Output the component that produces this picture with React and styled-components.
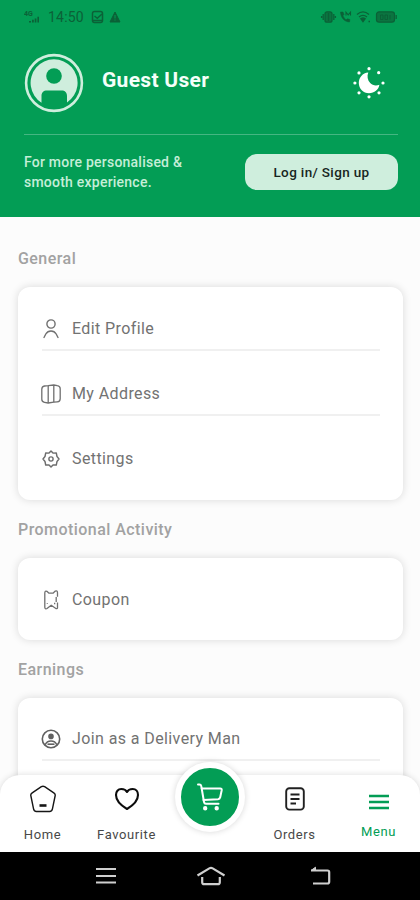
import React from "react";
import styled, { createGlobalStyle } from "styled-components";

const GlobalStyle = createGlobalStyle`
	* {
		box-sizing: border-box;
	}
	body {
		margin: 0;
		background: #fcfcfc;
		font-family: Roboto, "Liberation Sans", sans-serif;
	}
`;

const UserIcon = () => (
	<svg width="18" height="22" viewBox="0 0 18 22" fill="none" stroke="#707070" strokeWidth="1.400" strokeLinecap="round">
		<circle cx="9" cy="6" r="4.100" />
		<path d="M2 19.500 3.800 16C5 14 6.800 13 9 13s4 1 5.200 3l1.800 3.500" />
	</svg>
);

const MapIcon = () => (
	<svg width="20" height="20" viewBox="0 0 20 20" fill="none" stroke="#707070" strokeWidth="1.3" strokeLinejoin="round">
		<path d="M.8 5.200C.8 3.200 2 2.300 3.500 2l3.700-.3 5.600-.7 3.500.7c2 .3 2.900 1.300 2.900 3v10c0 2-.9 2.900-2.900 3.100l-3.500.4-5.600.8-3.700-.7C1.700 18 .8 17 .8 15.300z" />
		<path d="M7.200 1.700V19M12.800 1v17.200" />
	</svg>
);

const GearIcon = () => (
	<svg width="18" height="18" viewBox="0 0 18 18" fill="none" stroke="#6c6c6c" strokeWidth="1.400" strokeLinejoin="round">
		<path d="M9 1 11 3.100 14.300 3 15 6.500 17 9l-2 2.500-.7 3.500-3.300-.1L9 17l-2-2.100-3.300.1L3 11.500 1 9l2-2.500L3.700 3 7 3.100z" />
		<circle cx="9" cy="9" r="2.100" />
	</svg>
);

const CouponIcon = () => (
	<svg width="16" height="20" viewBox="0 0 16 20" fill="none" stroke="#707070" strokeWidth="1.3" strokeLinejoin="round">
		<path d="M1.800 17.300V3C1.800 1.200 2.700.7 3.900 1.300L6 3.200h4L12.300 1.100c1.300-.7 2.200 0 2.200 1.700v3.900M13.200 7v5M14.500 12.500v5.300c-.2 1-1.200 1-2 .4L8.200 15.200 4 18.500c-1 .7-2.200.3-2.200-1.200" />
		<path d="M4.300 13v.8M11 13.500h1.300" />
	</svg>
);

const DriverIcon = () => (
	<svg width="20" height="20" viewBox="0 0 20 20" fill="none" stroke="#606060" strokeWidth="1.6">
		<circle cx="10" cy="10" r="8.700" />
		<circle cx="10" cy="7.400" r="2" fill="#606060" />
		<path d="M4.200 15.800c1.200-2.800 3.200-3.800 5.800-3.800s4.600 1 5.800 3.800" />
		<path d="M6.500 15.200h7" />
	</svg>
);

const HomeIcon = () => (
	<svg width="28" height="28" viewBox="0 0 28 28" fill="none" stroke="#161616" strokeWidth="1.4" strokeLinejoin="round">
		<path d="M12.400 1.700c1-.6 2.200-.6 3.200 0l9.200 6.100c1.300.9 1.700 1.900 1.300 3.200l-2.600 12.600c-.3 1.900-1.200 2.900-2.900 2.900H7.400c-1.700 0-2.600-1-2.900-2.900L1.900 11c-.4-1.300 0-2.300 1.300-3.200z" />
		<path d="M10.500 20.500h7" strokeWidth="2.600" />
	</svg>
);

const HeartIcon = () => (
	<svg width="26" height="24" viewBox="0 0 26 24" fill="none" stroke="#0c0c0c" strokeWidth="2.100" strokeLinejoin="round">
		<path d="M13 22C8.500 19.300 2 14 2 8c0-3.300 2-6 5.300-6C10 2 12 3 13 5 14 3 16 2 18.700 2 22 2 24 4.700 24 8c0 6-6.500 11.300-11 14z" />
	</svg>
);

const OrdersIcon = () => (
	<svg width="20" height="24" viewBox="0 0 20 24" fill="none" stroke="#202020" strokeWidth="1.9">
		<rect x="1.200" y="1.200" width="17.600" height="21.400" rx="3.200" />
		<path d="M5.500 7.500h9M5.500 12h9M5.500 16.500h5.500" />
	</svg>
);

const MenuIcon = () => (
	<svg width="22" height="16" viewBox="0 0 22 16" stroke="#039d55" strokeWidth="2.400">
		<path d="M1 2h20M1 8h20M1 14h20" />
	</svg>
);

const CartIcon = () => (
	<svg width="28" height="28" viewBox="0 0 28 28" fill="none" stroke="#fff" strokeWidth="2" strokeLinecap="round" strokeLinejoin="round">
		<path d="M2 1.500h1.500c1 0 1.500.5 1.700 1.400l.5 2.600h18.500c1.200 0 1.700.7 1.500 1.800l-1.500 7c-.3 1.300-1 1.900-2.200 2L7.500 17" />
		<path d="M5.700 5.500 8 19c.2 1.200.8 1.700 2 1.700h12.500" />
		<circle cx="9.200" cy="25.300" r="1.200" fill="#fff" />
		<circle cx="20.700" cy="25.300" r="1.200" fill="#fff" />
	</svg>
);

const AvatarIcon = () => (
	<svg width="60" height="60" viewBox="0 0 60 60">
		<circle cx="30" cy="30" r="27.900" fill="none" stroke="#cfeedd" strokeWidth="2.600" />
		<path d="M17.500 49.700V43c0-3.500 2-5.500 5.500-5.500h14.500c3.500 0 5.500 2 5.500 5.500v6.500A23.500 23.500 0 1 0 17.500 49.700z" fill="#cfeedd" />
		<circle cx="30" cy="23" r="7.800" fill="#039d55" />
	</svg>
);

const MoonIcon = () => (
	<svg width="32" height="32" viewBox="0 0 32 32" fill="#fff">
		<path d="M15.300 5.500C9.500 6 5.800 10.500 5.800 16c0 5.600 4.500 10.200 10.200 10.200 5.400 0 9.700-3.500 10.400-8.400-3.200 1.500-7 .8-9.200-1.700-2.700-3-3.400-7-1.900-10.600z" />
		{[[16, 1.700], [25.700, 5.700], [30, 16], [26, 25.800], [16, 29.800], [6, 25.800], [1.900, 16], [6, 5.900]].map(([x, y]) => (
			<circle key={`${x}-${y}`} cx={x} cy={y} r="1.600" />
		))}
	</svg>
);

const SignalIcon = () => (
	<svg width="16" height="14" viewBox="0 0 16 14" fill="#0b6137">
		<text x="0" y="6" fontSize="7" fontWeight="700">4G</text>
		<path d="M5 11h2v1.500H5zM8 9.700h1.800v2.800H8zM10.700 8.400h1.700v4.100h-1.700zM13.400 6.800H15v5.700h-1.600z" />
	</svg>
);

const NoticeIcons = () => (
	<svg width="30" height="14" viewBox="0 0 30 14" fill="none" stroke="#0b6137" strokeWidth="1.500">
		<rect x="1.500" y="1.500" width="10" height="11" rx="2" />
		<path d="M3.500 6 6.300 8.300 11 4M2 10.500h9" />
		<path d="M24 2 29 12H19z" fill="#0b6137" stroke="#0b6137" strokeWidth="1" strokeLinejoin="round" />
		<path d="M24 5v3.500M24 9.500v1" stroke="#039d55" strokeWidth="1" />
	</svg>
);

const DeviceIcons = () => (
	<svg width="78" height="14" viewBox="0 0 78 14" fill="none" stroke="#0b6137" strokeWidth="1.300">
		<rect x="5" y="1.800" width="7" height="10.400" rx="2" fill="#0b7440" />
		<path d="M8.500 3v8M3.200 4v6M13.800 4v6M1.600 6v2M15.400 6v2" />
		<path d="M20.500 2c.2 5.500 3.700 9.700 9 10l.4-2.500-2.400-.7-1.400 1c-1.500-1-2.500-2.300-3.200-4L24 4.500 23 2z" fill="#0b6137" strokeWidth=".5" />
		<path d="M26 5.500V2.200l2.200 2.600 2.300-2.600v3.300" strokeWidth="1.100" />
		<path d="M37 4.500c3.700-3.300 8.300-3.300 12 0M39 7c2.400-2 5.600-2 8 0" />
		<path d="m40.800 8.700 2.200 3 2.200-3c-1.400-1-3-1-4.400 0z" fill="#0b6137" />
		<path d="M48.500 11.500h1.500" />
		<rect x="56.500" y="1.800" width="18" height="10.400" rx="2.600" fill="#0b7440" strokeWidth="1.200" />
		<path d="M60.500 5v4.500h2.500V5zM65 5v4.500h2.500V5zM70 5v4.500" strokeWidth="1" />
		<path d="M76.200 5v4" />
	</svg>
);

const RecentIcon = () => (
	<svg width="22" height="18" viewBox="0 0 22 18" stroke="#cfcfcf" strokeWidth="2.200">
		<path d="M1 2h20M1 9h20M1 15.500h20" />
	</svg>
);

const HouseIcon = () => (
	<svg width="30" height="20" viewBox="0 0 30 20" fill="none" stroke="#cfcfcf" strokeWidth="2.200">
		<path d="M1.500 9.500 13.300 2.400c1.100-.6 2.300-.6 3.400 0l11.800 7.100" />
		<path d="M6.200 11v5.200c0 1.400.6 2 2 2h13.600c1.400 0 2-.6 2-2V11" />
	</svg>
);

const BackIcon = () => (
	<svg width="22" height="20" viewBox="0 0 22 20" fill="none" stroke="#cfcfcf" strokeWidth="2.200">
		<path d="M2 4.500h16.500c1 0 1.700.7 1.700 1.700v9.600c0 1-.7 1.700-1.700 1.700H4" />
		<path d="M6.500 1.200 2 4.500h4.500z" fill="#cfcfcf" strokeWidth="1" />
	</svg>
);

const sections = [
	{
		title: "General",
		items: [
			{ label: "Edit Profile", icon: UserIcon },
			{ label: "My Address", icon: MapIcon },
			{ label: "Settings", icon: GearIcon },
		],
	},
	{
		title: "Promotional Activity",
		items: [{ label: "Coupon", icon: CouponIcon }],
	},
	{
		title: "Earnings",
		continues: true,
		items: [{ label: "Join as a Delivery Man", icon: DriverIcon }],
	},
];

function App() {
	return (
		<Screen>
			<GlobalStyle />
			<Header>
				<StatusBar>
					<SignalIcon />
					<Clock>14:50</Clock>
					<NoticeIcons />
					<Spacer />
					<DeviceIcons />
				</StatusBar>
				<Profile>
					<AvatarIcon />
					<UserName>Guest User</UserName>
					<MoonIcon />
				</Profile>
				<LoginRow>
					<Hint>
						For more personalised &amp;
						<br />
						smooth experience.
					</Hint>
					<LoginButton type="button">Log in/ Sign up</LoginButton>
				</LoginRow>
			</Header>
			<Content>
				{sections.map(({ title, items, continues }) => (
					<section key={title}>
						<SectionTitle>{title}</SectionTitle>
						<Card $continues={continues} $single={items.length === 1}>
							{items.map(({ label, icon: Icon }, i) => (
								<Row key={label} $line={continues || i < items.length - 1}>
									<IconSlot>
										<Icon />
									</IconSlot>
									{label}
								</Row>
							))}
						</Card>
					</section>
				))}
			</Content>
			<BottomNav>
				<NavItem>
					<HomeIcon />
					<NavLabel>Home</NavLabel>
				</NavItem>
				<NavItem>
					<HeartIcon />
					<NavLabel>Favourite</NavLabel>
				</NavItem>
				<CartSlot>
					<CartButton type="button">
						<CartIcon />
					</CartButton>
				</CartSlot>
				<NavItem>
					<OrdersIcon />
					<NavLabel>Orders</NavLabel>
				</NavItem>
				<NavItem $active>
					<MenuIcon />
					<NavLabel>Menu</NavLabel>
				</NavItem>
			</BottomNav>
			<SystemBar>
				<RecentIcon />
				<HouseIcon />
				<BackIcon />
			</SystemBar>
		</Screen>
	);
}

const Screen = styled.div`
	position: relative;
	display: flex;
	flex-direction: column;
	width: 420px;
	height: 900px;
	overflow: hidden;
	background: #fcfcfc;
`;

const Header = styled.header`
	flex: none;
	height: 217px;
	padding: 0 22px 0 24px;
	background: #039d55;
`;

const StatusBar = styled.div`
	display: flex;
	align-items: center;
	height: 34px;
`;

const Clock = styled.span`
	margin: 0 7px 0 8px;
	font-size: 14px;
	letter-spacing: 0.2px;
	color: #0b6137;
`;

const Spacer = styled.div`
	flex: 1;
`;

const Profile = styled.div`
	display: flex;
	align-items: center;
	height: 101px;
	padding: 0 13px 3px 0;
	border-bottom: 1px solid #45b682;
`;

const UserName = styled.h1`
	flex: 1;
	margin: 0 0 5px 18px;
	font-size: 21px;
	font-weight: 700;
	letter-spacing: 0.3px;
	color: #f4fff9;
`;

const LoginRow = styled.div`
	display: flex;
	align-items: center;
	justify-content: space-between;
	height: 74px;
`;

const Hint = styled.p`
	margin: 0;
	font-size: 14px;
	font-weight: 500;
	line-height: 20px;
	letter-spacing: 0.23px;
	color: #c5eed8;
`;

const LoginButton = styled.button`
	width: 153px;
	height: 36px;
	padding: 0;
	border: 0;
	border-radius: 12px;
	background: #cfeedd;
	font-family: inherit;
	font-size: 13.5px;
	font-weight: 500;
	letter-spacing: 0.35px;
	color: #17251e;
`;

const Content = styled.main`
	flex: 1;
	min-height: 0;
	overflow: hidden;
	padding: 12px 17px 0 18px;
`;

const SectionTitle = styled.h2`
	display: flex;
	align-items: center;
	height: 58px;
	margin: 0;
	font-size: 16px;
	font-weight: 500;
	letter-spacing: 0.45px;
	color: #a2a2a2;
`;

const Card = styled.div`
	display: flex;
	flex-direction: column;
	gap: 22px;
	min-height: ${(props) => (props.$continues ? "120px" : "0")};
	padding: ${(props) => (props.$continues ? "20px" : "21px")} 23px ${(props) => (props.$single ? "18px" : "19px")} 24px;
	border-radius: 12px;
	background: #fff;
	box-shadow: 0 0 8px rgba(0, 0, 0, 0.14);
`;

const Row = styled.div`
	display: flex;
	align-items: center;
	height: 43px;
	border-bottom: 2px solid ${(props) => (props.$line ? "#f0f0f0" : "transparent")};
	font-size: 16px;
	letter-spacing: 0.4px;
	color: #727272;
`;

const IconSlot = styled.span`
	display: flex;
	justify-content: center;
	width: 22px;
	margin: 0 10px 0 -2px;
`;

const BottomNav = styled.nav`
	position: absolute;
	left: 0;
	bottom: 48px;
	display: grid;
	grid-template-columns: repeat(5, 1fr);
	width: 100%;
	height: 77px;
	border-radius: 20px 20px 0 0;
	background: #fff;
	box-shadow: 0 0 6px rgba(0, 0, 0, 0.14);
`;

const NavItem = styled.div`
	display: grid;
	grid-template-rows: ${(props) => (props.$active ? "46px 12px" : "48px 22px")};
	align-items: center;
	justify-items: center;
	padding: ${(props) => (props.$active ? "4px" : "0")} 0 0 1px;
	color: ${(props) => (props.$active ? "#039d55" : "#484848")};
`;

const NavLabel = styled.span`
	font-size: 13px;
	letter-spacing: 0.6px;
`;

const CartSlot = styled.div`
	display: flex;
	justify-content: center;
	align-items: flex-start;
`;

const CartButton = styled.button`
	display: flex;
	align-items: center;
	justify-content: center;
	flex: none;
	width: 70px;
	height: 70px;
	margin-top: -13px;
	padding: 0;
	border: 6px solid #fff;
	border-radius: 50%;
	background: #039d55;
	box-shadow: 0 0 6px rgba(0, 0, 0, 0.16);
`;

const SystemBar = styled.footer`
	display: flex;
	align-items: center;
	justify-content: space-between;
	flex: none;
	height: 48px;
	padding: 0 89px 0 95px;
	background: #000;

	svg:nth-child(2) {
		margin-right: 4px;
	}
`;

export default App;
